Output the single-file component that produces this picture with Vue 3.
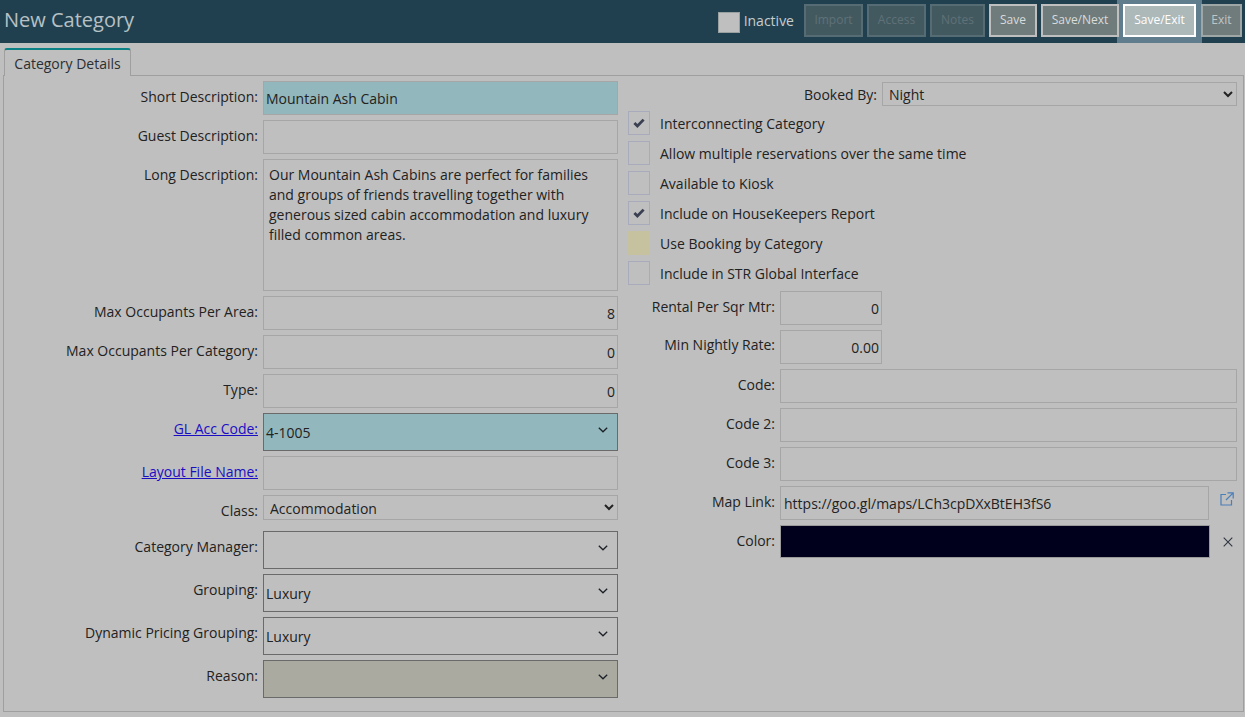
<script setup>
const buttons = [
  { label: 'Import', cls: 'off', w: 59 },
  { label: 'Access', cls: 'off', w: 59 },
  { label: 'Notes', cls: 'off', w: 55 },
  { label: 'Save', cls: 'on', w: 48 },
  { label: 'Save/Next', cls: 'on', w: 78 },
  { label: 'Save/Exit', cls: 'focus', w: 73 },
  { label: 'Exit', cls: 'dim', w: 41 },
]
const checks = [
  { label: 'Interconnecting Category', on: true },
  { label: 'Allow multiple reservations over the same time' },
  { label: 'Available to Kiosk' },
  { label: 'Include on HouseKeepers Report', on: true },
  { label: 'Use Booking by Category', tan: true },
  { label: 'Include in STR Global Interface' },
]
</script>

<template>
  <div class="page">
    <header class="topbar">
      <h1>New Category</h1>
      <div class="actions">
        <span class="inactive"><i class="inactive-box"></i>Inactive</span>
        <button
          v-for="b in buttons"
          :key="b.label"
          :class="['btn', b.cls]"
          :style="{ width: b.w + 'px' }"
        >{{ b.label }}</button>
      </div>
    </header>

    <div class="tabs"><span class="tab">Category Details</span></div>

    <main class="panel">
      <section class="col left">
        <div class="row h34"><label>Short Description:</label><input class="field teal" value="Mountain Ash Cabin" /></div>
        <div class="row h34"><label>Guest Description:</label><input class="field" /></div>
        <div class="row"><label>Long Description:</label>
          <div class="field area">Our Mountain Ash Cabins are perfect for families and groups of friends travelling together with generous sized cabin accommodation and luxury filled common areas.</div>
        </div>
        <div class="row h34"><label>Max Occupants Per Area:</label><input class="field num" value="8" /></div>
        <div class="row h34"><label>Max Occupants Per Category:</label><input class="field num" value="0" /></div>
        <div class="row h34"><label>Type:</label><input class="field num" value="0" /></div>
        <div class="row"><label><a>GL Acc Code:</a></label>
          <div class="combo teal"><span>4-1005</span><svg viewBox="0 0 10 6"><path d="M.8.8 5 4.8 9.2.8" /></svg></div>
        </div>
        <div class="row h34"><label><a>Layout File Name:</a></label><input class="field" /></div>
        <div class="row class-row"><label>Class:</label>
          <select class="native"><option>Accommodation</option></select>
        </div>
        <div class="row"><label>Category Manager:</label>
          <div class="combo"><span></span><svg viewBox="0 0 10 6"><path d="M.8.8 5 4.8 9.2.8" /></svg></div>
        </div>
        <div class="row"><label>Grouping:</label>
          <div class="combo"><span>Luxury</span><svg viewBox="0 0 10 6"><path d="M.8.8 5 4.8 9.2.8" /></svg></div>
        </div>
        <div class="row"><label>Dynamic Pricing Grouping:</label>
          <div class="combo"><span>Luxury</span><svg viewBox="0 0 10 6"><path d="M.8.8 5 4.8 9.2.8" /></svg></div>
        </div>
        <div class="row"><label>Reason:</label>
          <div class="combo grey"><span></span><svg viewBox="0 0 10 6"><path d="M.8.8 5 4.8 9.2.8" /></svg></div>
        </div>
      </section>

      <section class="col right">
        <div class="booked"><label>Booked By:</label>
          <select class="native"><option>Night</option></select>
        </div>
        <div class="checks">
          <div v-for="c in checks" :key="c.label" class="check">
            <span :class="['box', { tan: c.tan }]">
              <svg v-if="c.on" viewBox="0 0 12 10"><path d="M1.400 5 4.400 8 10.600 1.600" /></svg>
            </span>
            <span class="check-text">{{ c.label }}</span>
          </div>
        </div>
        <div class="rrow"><label>Rental Per Sqr Mtr:</label><input class="field num short" value="0" /></div>
        <div class="rrow"><label class="up">Min Nightly Rate:</label><input class="field num short" value="0.00" /></div>
        <div class="rrow"><label>Code:</label><input class="field wide" /></div>
        <div class="rrow"><label>Code 2:</label><input class="field wide" /></div>
        <div class="rrow"><label>Code 3:</label><input class="field wide" /></div>
        <div class="rrow"><label>Map Link:</label>
          <input class="field link" value="https://goo.gl/maps/LCh3cpDXxBtEH3fS6" />
          <svg class="ext" viewBox="0 0 14 14"><path d="M6 2.500H1v10.500h10.500V8M7.500 .8h5.700v5.700M13.200 .8 6 8" /></svg>
        </div>
        <div class="rrow color-row"><label>Color:</label>
          <div class="swatch"></div>
          <svg class="clear" viewBox="0 0 10 10"><path d="M.7.7 9.300 9.300M9.300.7.7 9.300" /></svg>
        </div>
      </section>
    </main>
  </div>
</template>

<style>
html, body { margin: 0; background: #bfbfbf; }
</style>

<style scoped>
.page {
  width: 1245px;
  height: 717px;
  overflow: hidden;
  background: #bfbfbf;
  font-family: "Open Sans", sans-serif;
  font-size: 14px;
  color: #222;
}
.topbar {
  height: 43px;
  background: #21404f;
  display: flex;
  align-items: flex-start;
  justify-content: space-between;
  box-sizing: border-box;
  padding: 0 3px 0 4px;
  overflow: hidden;
}
h1 {
  margin: 0;
  font-size: 20px;
  font-weight: 400;
  line-height: 40px;
  color: #b7c1c5;
}
.actions { display: flex; gap: 4px; padding-top: 4px; }
.inactive {
  display: flex;
  align-items: center;
  height: 33px;
  color: #c6cdcf;
  margin-right: 6px;
  gap: 4px;
}
.inactive-box {
  width: 22px;
  height: 21px;
  margin-top: 3px;
  box-sizing: border-box;
  background: #bfbfbf;
  border: 1px solid #9a9f9f;
}
.btn {
  height: 33px;
  box-sizing: border-box;
  padding: 0 0 2px;
  font: 12px "Open Sans", sans-serif;
  border: 2px solid;
  position: relative;
  z-index: 1;
}
.btn.off { background: #435960; border-color: #566c75; color: #5f7177; }
.btn.on { background: #707b7b; border-color: #bfbfbf; color: #d8dcdc; }
.btn.dim { background: #707b7b; border-color: #9ea6a6; color: #c0c6c6; margin-left: 1px; }
.btn.focus {
  background: #adb8b8;
  border-color: #fff;
  color: #fff;
  box-shadow: 0 0 0 6px #5f7d8c;
  z-index: 0;
}
.tabs {
  height: 33px;
  box-sizing: border-box;
  padding: 5px 0 0 4px;
}
.tab {
  display: block;
  box-sizing: border-box;
  width: 127px;
  height: 28px;
  border: 1px solid #9f9f9f;
  border-top: 2px solid #0b8085;
  border-bottom: 0;
  border-radius: 3px 3px 0 0;
  text-align: center;
  line-height: 27px;
  position: relative;
  z-index: 1;
  background: #bfbfbf;
  color: #2b2f33;
}
.panel {
  margin: -1px 1px 0 3px;
  height: 637px;
  box-sizing: border-box;
  border: 1px solid #9f9f9f;
  display: flex;
  padding: 5px 6px 0 0;
  gap: 10px;
}
.left { width: 614px; display: flex; flex-direction: column; gap: 5px; }
.right { flex: 1; }
.row {
  display: grid;
  grid-template-columns: 254px 355px;
  column-gap: 5px;
}
label {
  display: block;
  text-align: right;
  line-height: 20px;
  padding-top: 6px;
  white-space: nowrap;
  color: #222;
}
label.up { padding-top: 5px; }
a { color: #1a0dc4; text-decoration: underline; }
.h34 { height: 34px; }
.field {
  box-sizing: border-box;
  border: 1px solid #a6a6a6;
  background: transparent;
  height: 34px;
  width: 100%;
  padding: 2px;
  margin: 0;
  font: 14px "Open Sans", sans-serif;
  color: #222;
  outline: 0;
  border-radius: 0;
}
.field.teal { background: #92b7bc; }
.area {
  height: 132px;
  padding: 5px 5px;
  line-height: 20px;
}
.field.num { text-align: right; }
.combo {
  box-sizing: border-box;
  height: 38px;
  border: 1px solid #6a6a6a;
  display: flex;
  align-items: center;
  justify-content: space-between;
  padding: 0 9px 0 2px;
  color: #222;
}
.combo span { padding-top: 1px; }
.combo svg {
  width: 10px;
  height: 6px;
  margin-top: -5px;
  fill: none;
  stroke: #1c2128;
  stroke-width: 1.300;
}
.combo.teal { background: #92b7bc; }
.combo.grey { background: #aaaaa1; }
.native {
  box-sizing: border-box;
  width: 100%;
  height: 25px;
  border: 1px solid #a6a6a6;
  background: transparent;
  font: 14px "Open Sans", sans-serif;
  color: #222;
  border-radius: 0;
  outline: 0;
  padding: 2px 3px 0 2px;
}
.class-row { margin-bottom: 5px; }
.booked {
  display: flex;
  justify-content: flex-end;
  margin-top: 1px;
}
.booked label { padding: 3px 5px 0 0; }
.booked .native { width: 355px; height: 24px; padding-top: 0; }
.checks { margin-top: 5px; display: flex; flex-direction: column; gap: 6px; }
.check {
  display: flex;
  align-items: center;
  gap: 10px;
  height: 24px;
  line-height: 24px;
}
.check-text { padding-top: 2px; }
.box {
  box-sizing: border-box;
  width: 22px;
  height: 24px;
  border: 1px solid #a8abbc;
  display: flex;
  align-items: center;
  justify-content: center;
}
.box.tan { background: #c6c2a0; border-color: #c6c2a0; }
.box svg {
  width: 12px;
  height: 10px;
  fill: none;
  stroke: #3a3f52;
  stroke-width: 2.800;
}
.rrow {
  display: flex;
  margin-top: 5px;
  gap: 5px;
  height: 34px;
  position: relative;
}
.checks + .rrow { margin-top: 6px; }
.rrow label { width: 147px; }
.short { width: 102px; }
.wide { width: 457px; }
.link { width: 429px; padding-left: 3px; }
.ext {
  width: 14px;
  height: 14px;
  margin: 6px 0 0 6px;
  fill: none;
  stroke: #4a7fb8;
  stroke-width: 1.200;
}
.color-row { height: 33px; }
.swatch {
  box-sizing: border-box;
  width: 430px;
  height: 33px;
  background: #00001c;
  border: 1px solid #9a9a9a;
}
.clear {
  width: 10px;
  height: 10px;
  margin: 12px 0 0 8px;
  fill: none;
  stroke: #2f3640;
  stroke-width: 1.100;
}
</style>
